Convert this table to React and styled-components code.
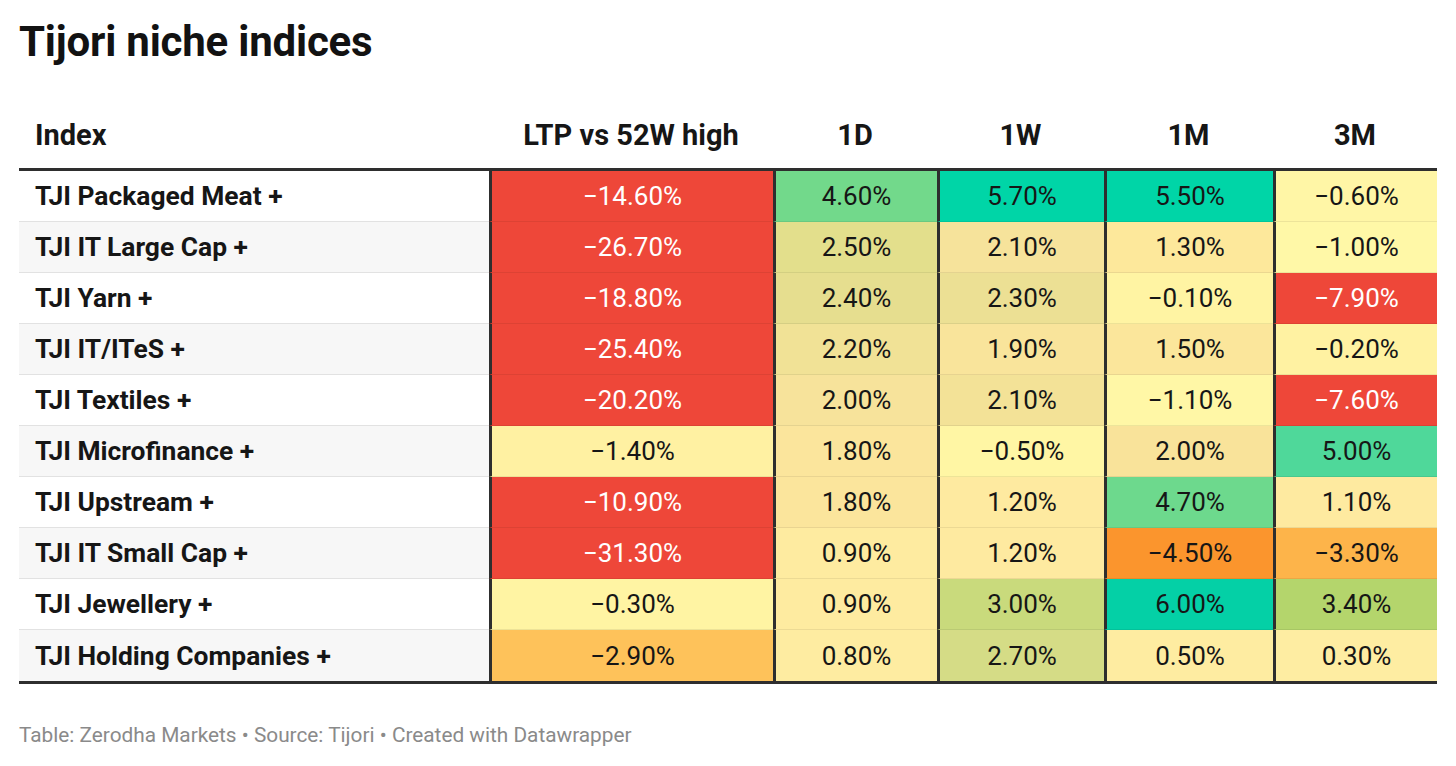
import React from 'react';
import styled, { createGlobalStyle } from 'styled-components';

const GlobalStyle = createGlobalStyle`
  html, body {
    margin: 0;
    padding: 0;
    background: #ffffff;
    font-family: Roboto, "Liberation Sans", Arial, sans-serif;
    color: #1a1a1a;
  }
`;

const StyledWrap = styled.div`
  width: 1456px;
  height: 766px;
  padding: 17px 19px 0 19px;
  box-sizing: border-box;
  overflow: hidden;
`;

const StyledTitle = styled.h1`
  margin: 0;
  font-size: 42px;
  line-height: 50px;
  font-weight: 700;
  color: #121212;
  letter-spacing: -0.2px;
`;

const StyledTable = styled.div`
  display: grid;
  grid-template-columns: 470px 284px 164px 167px 169px 164px;
  width: 1418px;
  margin-top: 43px;
  border-bottom: 3px solid #2e2e2e;
`;

const StyledHead = styled.div`
  padding: 8px 16px 16px;
  font-size: 29px;
  line-height: 34px;
  font-weight: 700;
  color: #161616;
  text-align: ${(p) => (p.$left ? 'left' : 'center')};
  border-bottom: 3px solid #2e2e2e;
`;

const StyledName = styled.div`
  display: flex;
  align-items: center;
  padding: 0 16px;
  font-size: 26.4px;
  font-weight: 700;
  color: #161616;
  background: ${(p) => (p.$odd ? '#f7f7f7' : '#ffffff')};
  border-bottom: ${(p) => (p.$last ? 'none' : '1px solid #e2e2e2')};
  height: ${(p) => (p.$last ? '51px' : '50px')};
`;

const StyledValue = styled.div`
  display: flex;
  align-items: center;
  justify-content: center;
  height: ${(p) => (p.$last ? '51px' : '50px')};
  font-size: 26px;
  font-weight: 400;
  color: ${(p) => (p.$light ? '#ffffff' : '#161616')};
  background: ${(p) => p.$bg};
  border-left: 3px solid #2e2e2e;
  border-bottom: ${(p) => (p.$last ? 'none' : '1px solid rgba(0, 0, 0, 0.07)')};
`;

const StyledFooter = styled.div`
  margin-top: 39px;
  font-size: 20.8px;
  line-height: 24px;
  color: #8a8a8a;
`;

const RED = '#ee4739';

const rows = [
  ['TJI Packaged Meat +', [['−14.60%', RED], ['4.60%', '#72d98b'], ['5.70%', '#00d5a7'], ['5.50%', '#00d5a7'], ['−0.60%', '#fff6a6']]],
  ['TJI IT Large Cap +', [['−26.70%', RED], ['2.50%', '#e3df8c'], ['2.10%', '#f6e39b'], ['1.30%', '#fde89b'], ['−1.00%', '#fff8a7']]],
  ['TJI Yarn +', [['−18.80%', RED], ['2.40%', '#e6de8f'], ['2.30%', '#ece094'], ['−0.10%', '#fff4a3'], ['−7.90%', RED]]],
  ['TJI IT/ITeS +', [['−25.40%', RED], ['2.20%', '#f1e296'], ['1.90%', '#f9e49b'], ['1.50%', '#fbe69b'], ['−0.20%', '#fff2a2']]],
  ['TJI Textiles +', [['−20.20%', RED], ['2.00%', '#f7e39b'], ['2.10%', '#f3e297'], ['−1.10%', '#fff7a6'], ['−7.60%', RED]]],
  ['TJI Microfinance +', [['−1.40%', '#fff1a2'], ['1.80%', '#fbe59c'], ['−0.50%', '#fff6a4'], ['2.00%', '#f9e39a'], ['5.00%', '#4fd89a']]],
  ['TJI Upstream +', [['−10.90%', RED], ['1.80%', '#fbe59c'], ['1.20%', '#feeaa0'], ['4.70%', '#6dd98d'], ['1.10%', '#feeaa0']]],
  ['TJI IT Small Cap +', [['−31.30%', RED], ['0.90%', '#feeba0'], ['1.20%', '#feeaa0'], ['−4.50%', '#fb952d'], ['−3.30%', '#fdb44a']]],
  ['TJI Jewellery +', [['−0.30%', '#fff4a3'], ['0.90%', '#feeba0'], ['3.00%', '#c9da7c'], ['6.00%', '#04d0a6'], ['3.40%', '#b4d56c']]],
  ['TJI Holding Companies +', [['−2.90%', '#fec25a'], ['0.80%', '#feeca1'], ['2.70%', '#d5dc86'], ['0.50%', '#feeca1'], ['0.30%', '#feeda2']]],
];

const heads = ['LTP vs 52W high', '1D', '1W', '1M', '3M'];

export default function App() {
  return (
    <StyledWrap>
      <GlobalStyle />
      <StyledTitle>Tijori niche indices</StyledTitle>
      <StyledTable>
        <StyledHead $left>Index</StyledHead>
        {heads.map((h) => (
          <StyledHead key={h}>{h}</StyledHead>
        ))}
        {rows.map(([name, values], i) => {
          const last = i === rows.length - 1;
          return (
            <React.Fragment key={name}>
              <StyledName $odd={i % 2 === 1} $last={last}>{name}</StyledName>
              {values.map(([v, bg], j) => (
                <StyledValue key={j} $bg={bg} $light={bg === RED} $last={last}>
                  {v}
                </StyledValue>
              ))}
            </React.Fragment>
          );
        })}
      </StyledTable>
      <StyledFooter>Table: Zerodha Markets • Source: Tijori • Created with Datawrapper</StyledFooter>
    </StyledWrap>
  );
}
